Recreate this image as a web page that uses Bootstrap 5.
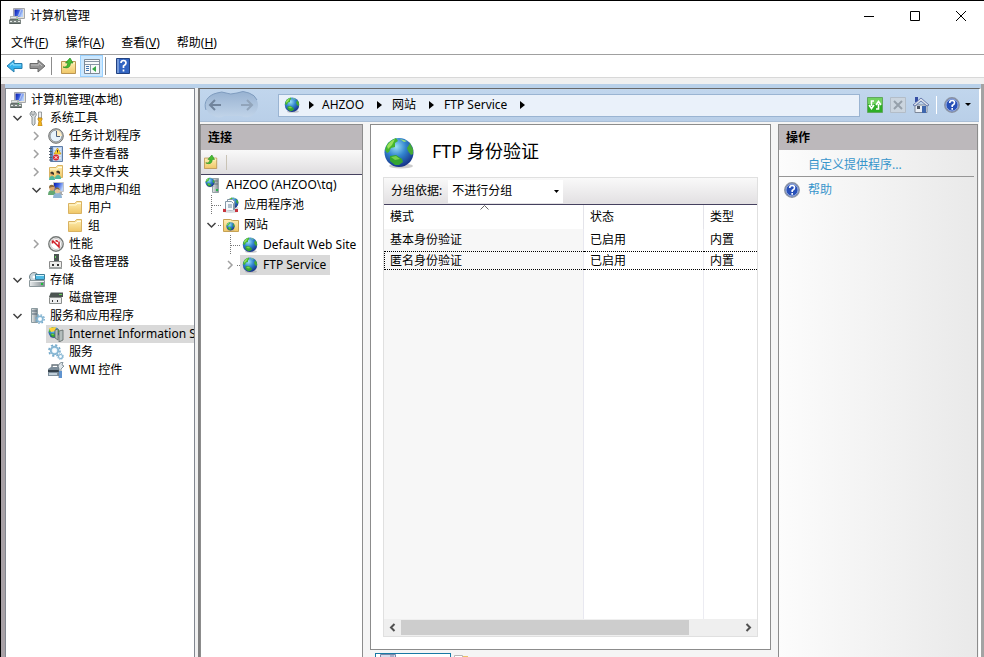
<!DOCTYPE html>
<html lang="zh-CN">
<head>
<meta charset="utf-8">
<meta name="viewport" content="width=device-width, initial-scale=1">
<title>计算机管理</title>
<link rel="stylesheet" href="https://cdn.jsdelivr.net/npm/bootstrap@5.3.0/dist/css/bootstrap.min.css">
<style>
body{font:12px/18px "Noto Sans","Noto Sans CJK SC",sans-serif;color:#000;background:#fff}
button,select{font:inherit;color:inherit}
svg{display:block;flex:none}
.window{border-top:1px solid #000;border-left:1px solid #000}
.ic{width:16px;height:16px}
.plain{border:0;background:none;padding:0}
.titlebar{height:30px;padding-left:8px}
.titlebar h1{font-size:12px;line-height:18px;margin:0 0 0 5px}
.win-btn{width:46px;height:29px}
.menus{height:24px;padding-left:10px;gap:17px;border-bottom:1px solid #a0a0a0}
.tools{height:23px;padding-left:2px;border-bottom:1px solid #d8d8d8}
.tools .plain{width:23px;height:22px;display:flex;align-items:center;justify-content:center}
.tools .pressed{background:#cce8ff;border:1px solid #99d1ff}
.vline{width:1px;height:18px;background:#8c8c8c}
.tools .vline{margin:0 5px 0 2px}
.strip{height:6px;background:#f0f0f0}
.work{background:#b9d1ea;border-left:4px solid #a8a1a6;border-right:3px solid #a3a3a3;padding-top:4px}
.panes{background:#f0f0f0}
.console-tree{width:190px;border:1px solid #828790;border-bottom:0;background:#fff;padding:2px 2px 0 2px}
.tree,.tree ul{list-style:none;margin:0;padding:0}
.tree ul ul{padding-left:19px}
.node{display:flex;align-items:center;height:18px;white-space:nowrap}
.iis .node{height:20px}
.slot{width:19px;height:100%;flex:none}
.tag{display:flex;align-items:center;height:100%;gap:5px;padding:0 4px 0 2px}
.picked{background:#d9d9d9}
.console-tree .picked{flex:1 0 auto}
.iis{margin-left:3px;border-left:2px solid #808080;border-top:1px solid #696969;border-right:2px solid #fff;background:#f5f5f5;box-shadow:0 -1px 0 #a0a0a0}
.nav-strip{height:33px;padding:0 5px 0 3px;background:linear-gradient(#c1d6ed,#b9cfe8);border-bottom:1px solid #a9bed6}
.address{height:23px;margin-left:18px;border:1px solid #9ab4d2;background:#eaf1fa;padding-left:5px}
.address a{color:#000;text-decoration:none}
.crumb{width:28px;height:12px}
.crumb-first{width:22px;height:12px}
.nav-tools{gap:7px;margin-left:7px}
.side{border:1px solid #8c8c8c;border-bottom:0}
.side h2{font-size:12px;font-weight:700;line-height:25px;height:25px;margin:0;background:#bcb8bb;padding-left:7px}
.connections{width:163px;background:#fff}
.mini-bar{height:25px;padding-left:3px;background:linear-gradient(#f9f9f9,#dfdddf);border-bottom:1px solid #45415f}
.main-gap{padding:2px 1px 0 0;gap:7px}
.feature{border:1px solid #8c8c8c;background:#fff;padding:12px}
.feature-title{height:40px;padding-bottom:8px}
.feature-title h2{font-size:18px;line-height:26px;margin:0 0 5px 17px;font-weight:400}
.listing{border:1px solid #e0e0e0}
.group-bar{height:27px;padding-left:7px;background:linear-gradient(#f9f9f9,#e2e0e2);border-bottom:1px solid #45415f}
.group-box{width:115px;height:23px;border:0;border-radius:0;padding:0 4px;margin-left:6px;appearance:none;background:#fff url("data:image/svg+xml,%3Csvg xmlns='http://www.w3.org/2000/svg' viewBox='0 0 5 3'%3E%3Cpath d='M0 0h5L2.500 3z'/%3E%3C/svg%3E") no-repeat right 4px center/5px 3px}
.cells{background:linear-gradient(90deg,#f7f7f7 199px,#e8e8f0 199px 200px,#fff 200px 319px,#ececf2 319px 320px,#fff 320px)}
.cells table{width:100%;table-layout:fixed;border-collapse:separate;border-spacing:0}
.cells th{font-weight:400;background:#fff;height:24px;padding:0 6px;border-right:1px solid #e4e4ea}
.cells th:last-child{border-right:0}
.cells td{height:22px;padding:0 6px}
.cells .focused td{height:19px;padding-top:0;border-top:1px dotted #000;border-bottom:1px dotted #000;line-height:17px}
.cells .focused td:first-child{border-left:1px dotted #000;padding-left:5px}
.c1{width:200px}.c2{width:120px}
.sorted{position:relative}
.sorted svg{position:absolute;top:0;left:96px}
.hscroll{height:17px;background:#efefef}
.hscroll button{width:17px;height:17px;display:flex;align-items:center;justify-content:center}
.thumb{width:85%;height:15px;background:#cdcdcd}
.tabs-row{height:7px;padding:3px 0 0 5px;gap:3px}
.view-tab{width:76px;height:24px;border:1px solid #1879a5;background:#fff}
.actions{width:200px;background:linear-gradient(90deg,#fcfcfc,#e9e9e9)}
.actions a{color:#3795cb;text-decoration:none}
.act-row{height:27px;padding:3px 0 0 29px;margin-right:3px;border-bottom:1px solid #969696}
.act-help{height:26px;padding-left:5px;gap:8px}
</style>
<script src="https://cdn.jsdelivr.net/npm/bootstrap@5.3.0/dist/js/bootstrap.bundle.min.js"></script>
</head>
<body>
<svg width="0" height="0" class="position-absolute" aria-hidden="true">
<defs>
<radialGradient id="sea" cx=".4" cy=".3" r=".75"><stop offset="0" stop-color="#9be0f5"/><stop offset=".45" stop-color="#3284cf"/><stop offset="1" stop-color="#122a80"/></radialGradient>
<linearGradient id="fold" x2="0" y2="1"><stop stop-color="#fff0b5"/><stop offset="1" stop-color="#efc666"/></linearGradient>
<linearGradient id="scr" x2="1" y2=".4"><stop stop-color="#0718a8"/><stop offset=".5" stop-color="#3458dc"/><stop offset="1" stop-color="#b7d1fb"/></linearGradient>
<linearGradient id="pill" x2="0" y2="1"><stop stop-color="#98b2d1"/><stop offset="1" stop-color="#c1d4e9"/></linearGradient>
<linearGradient id="met" x2="1"><stop stop-color="#e8ebec"/><stop offset="1" stop-color="#7f898e"/></linearGradient>
<symbol id="globe" viewBox="0 0 32 32"><ellipse cx="18" cy="29" rx="12" ry="2.500" fill="#999" opacity=".5"/><circle cx="16" cy="15.500" r="14.500" fill="url(#sea)"/><path d="M2 13Q4 4 13 1l2 3-3 2 0 4-4 1-2 4-2 1z" fill="#45b52f"/><path d="M4 9q3-5 8-7l-3 6-4 4z" fill="#98e15d"/><path d="M7 19l6-1 6 4 1 3-4 3-4 0-5-4z" fill="#35a530"/><path d="M8 20l5-1 4 3-5 1z" fill="#77d14e"/><path d="M27 6l3 6 0 5-2 1-3-4-1-3 2-3z" fill="#45aa36"/><path d="M17 2l7 2-3 1z" fill="#9be173"/></symbol>
<symbol id="pc" viewBox="0 0 16 16"><path fill="#e6e3d8" stroke="#a5a7ac" d="M4.500.5h11v10h-11z"/><path fill="url(#scr)" d="M5.500 1.500h8.500V9H5.500z"/><path fill="#fff" d="M11 2h1.500L10 8H9z" opacity=".5"/><path fill="#b5bab8" d="M1 8h8v4H1z"/><path fill="#7c8582" d="M0 11.500h12V16H0z"/><path fill="#e3e9e6" d="M1 13h2v1H1zm4 0h2v1H5zm4 0h2v1H9zM2 9h5v1H2z"/><path fill="#56605d" d="M1 15h10v1H1zM1 11h8v.8H1z"/><path fill="#2ab23c" d="M8 11h1v1H8z"/></symbol>
<symbol id="folder" viewBox="0 0 16 16"><path d="M1.500 3.500h6.500l1.500-2h5v12h-13z" fill="url(#fold)" stroke="#d9b261"/><path d="M10 3.500h4" stroke="#fffbe8"/><path d="M2 5h7l1-1" fill="none" stroke="#fff7d0"/></symbol>
<symbol id="upfolder" viewBox="0 0 16 16"><path d="M.5 3.500h14v12H.5z" fill="url(#fold)" stroke="#bb9653"/><path d="M9 4h5v2H9z" fill="#fff2bd"/><path d="M2 9Q6 10 7 5H4.500L9 0l3 5H9.500Q9 12 2 9z" fill="#47bd32" stroke="#258d20" stroke-width=".7"/></symbol>
<symbol id="tools" viewBox="0 0 16 16"><path d="M3 1v4h2V1q4 3 1 6v7q-2 3-3 0V7Q-1 4 3 1z" fill="#dbe0e2" stroke="#6e7679" stroke-width=".8"/><path d="M9.500 2h3v6h-3z" fill="#eee" stroke="#73797b" stroke-width=".7"/><path d="M9 8h4v2l-1 1 1 5H9l1-5-1-1z" fill="#f2b51c" stroke="#b77b0c" stroke-width=".7"/></symbol>
<symbol id="clock" viewBox="0 0 16 16"><circle cx="8" cy="8" r="7.300" fill="#bcbcb8" stroke="#6f7273"/><circle cx="8" cy="8" r="5.800" fill="#e6f2fc" stroke="#737f8b" stroke-width=".6"/><path d="M8.500 2a6 6 0 0 1 5.500 6H8.500z" fill="#ffedc2"/><path d="M8.500 3v5.500H12" fill="none" stroke="#4b5e7c"/></symbol>
<symbol id="log" viewBox="0 0 16 16"><path d="M2.500.5h12v15h-12z" fill="#b9d0ec" stroke="#5f7da7"/><path d="M3 1h2v14H3z" fill="#5b82ba"/><path d="M6 3h7M6 6h7M6 9h7M6 12h7" stroke="#fff"/><path d="M1 2.500h3M1 5.500h3M1 8.500h3M1 11.500h3M1 14h3" stroke="#515d6c"/><path d="M9.500 2l3.500 6H6z" fill="#ffd62d" stroke="#bf8600" stroke-width=".6"/><path d="M9.500 4v2.500" stroke="#432"/><circle cx="8" cy="11.500" r="3" fill="#da2832"/><path d="M6.700 10.200l2.600 2.600m0-2.600l-2.600 2.600" stroke="#fff"/></symbol>
<symbol id="shared" viewBox="0 0 16 16"><use href="#folder"/><path d="M1 16q0-4 3-4t3 4zM7 15q0-4 3-4t3 4z" fill="#4fb79d"/><circle cx="4" cy="10" r="1.800" fill="#d49a63"/><circle cx="10" cy="9" r="1.800" fill="#d49a63"/><path d="M2 9q2-3 4 0v2zm6-1q2-3 4 0v2z" fill="#3a352b"/></symbol>
<symbol id="users" viewBox="0 0 16 16"><path d="M5.500.5h10v9h-10z" fill="url(#scr)" stroke="#c3c5c8"/><path d="M11 10h3v2h1v1h-5z" fill="#aaa"/><path d="M0 13q0-5 4-5t4 5z" fill="#65a873"/><circle cx="4" cy="6" r="2.800" fill="#dda66c"/><path d="M1 6q0-4 4-3l2 2-3 0z" fill="#8b6c3e"/><path d="M5 16q0-5 4.500-5t4.500 5z" fill="#8fb4d4"/><circle cx="9.500" cy="8.500" r="2.800" fill="#e8c69c"/><path d="M7 8q0-4 4-2l1 2-3-1z" fill="#7d6644"/></symbol>
<symbol id="perf" viewBox="0 0 16 16"><circle cx="8" cy="8" r="7.200" fill="#fff" stroke="#747876" stroke-width="1.400"/><circle cx="8" cy="8" r="5.500" fill="none" stroke="#c4c4c4"/><path d="M4.500 4.500l6.500 6.500V5.500M4.500 4.500v3M7.500 4.500l2.500 1" fill="none" stroke="#cf1d25" stroke-width="1.500"/></symbol>
<symbol id="device" viewBox="0 0 16 16"><path d="M6 0h5v8H6z" fill="#4c5553"/><path d="M7 2h1v2H7z" fill="#6bdb63"/><path d="M1.500 7.500h12v6h-12z" fill="#eeeeec" stroke="#8a8a8a"/><path d="M1 13h13v2H1z" fill="#9fa3a2"/><path d="M4 10h2v2H4zm5 0h2v2H9z" fill="#333"/></symbol>
<symbol id="store" viewBox="0 0 16 16"><circle cx="5" cy="5" r="4.500" fill="#c6d3d9" stroke="#74858c"/><circle cx="5" cy="5" r="1.500" fill="#fff"/><path d="M6.500 2.500h9v5h-9z" fill="#4ebbe5" stroke="#3e7c97"/><path d="M7 3h8v1H7z" fill="#cef5ff"/><path d="M.5 8.500h15v6H.5z" fill="url(#met)" stroke="#8b979b"/><path d="M1 9h14v1H1z" fill="#eef1f2"/><path d="M12 11h2v2h-2z" fill="#1ac139"/></symbol>
<symbol id="disk" viewBox="0 0 16 16"><path d="M3 2h12v5H1z" fill="#4b5350"/><path d="M3 2h12v1H3z" fill="#a6abaa"/><path d="M11 4h3v1h-3z" fill="#64d257"/><path d="M1.500 7.500h12v6h-12z" fill="#eee" stroke="#8a8e8c"/><path d="M4 10h1v2H4zm5 0h1v2H9z" fill="#333"/></symbol>
<symbol id="cog" viewBox="0 0 16 16"><circle cx="8" cy="8" r="4.600" fill="#e8f4fb" stroke="#86b6d3" stroke-width="2.400"/><circle cx="8" cy="8" r="6.800" fill="none" stroke="#74a9ca" stroke-width="2" stroke-dasharray="2.700 2.640"/><circle cx="8" cy="8" r="2" fill="#fff"/></symbol>
<symbol id="apps" viewBox="0 0 16 16"><path d="M2.500.5h6v14h-6z" fill="url(#met)" stroke="#8b9ba0"/><path d="M3 3h5M3 6h5" stroke="#567"/><use href="#cog" x="6" y="6" width="10" height="10"/></symbol>
<symbol id="inet" viewBox="0 0 16 16"><use href="#globe" width="12" height="13"/><path d="M1 2l7-1-1 4-4 1z" fill="#ffd037"/><path d="M7 4l3-1v11l-3-2zM11 5l4-1v10l-4 2z" fill="#b4bebd" stroke="#5e6867" stroke-width=".8"/></symbol>
<symbol id="gears" viewBox="0 0 16 16"><use href="#cog" width="13" height="13"/><use href="#cog" x="9" y="9" width="7" height="7"/></symbol>
<symbol id="wmi" viewBox="0 0 16 16"><path d="M4 5V3h6v2" fill="none" stroke="#65727a" stroke-width="1.300"/><path d="M0 7l3-2h10v9H0z" fill="#7c8d9a"/><path d="M0 8h12v2H0z" fill="#35414b"/><path d="M1 11h8v2H1z" fill="#c1cfd9"/><path d="M12 1l3-1-1 3 2 1-3 3v9h-2V7l-1-3z" fill="#dfe6ea" stroke="#5d6f7a" stroke-width=".7"/><path d="M11 9h3v7h-3z" fill="#5f93cf"/></symbol>
<symbol id="host" viewBox="0 0 16 16"><path d="M7.500 1.500h6v14h-6z" fill="url(#met)" stroke="#96a1a6"/><path d="M8 4h5M8 7h5" stroke="#68757b"/><path d="M11 12h2v2h-2z" fill="#29b54a"/><use href="#globe" width="10" height="11"/></symbol>
<symbol id="pool" viewBox="0 0 16 16"><use href="#globe" x="4" width="12" height="12"/><path d="M4.500 2.500h5l2 2v9h-7z" fill="#fff" stroke="#8192a1"/><path d="M2.500 4.500h6l2 2v7h-8z" fill="#f6f9fb" stroke="#8598a8"/><path d="M5 8h4M5 10h4" stroke="#6b86a0"/><path d="M0 11q7 5 15 0v4q-7 2-15 0z" fill="#d8dce0"/><path d="M0 12h3v3H0zM12 12h3v3h-3z" fill="#c8343d"/></symbol>
<symbol id="sites" viewBox="0 0 16 16"><path d="M.5 2.500h7l2 1h6v11H.5z" fill="url(#fold)" stroke="#c6a255"/><use href="#globe" x="3" y="5" width="9" height="9"/></symbol>
<symbol id="help" viewBox="0 0 16 16"><circle cx="8" cy="8" r="7.200" fill="#2850b8" stroke="#8b93a3" stroke-width="1.500"/><circle cx="8" cy="8" r="6" fill="none" stroke="#cad8f5" stroke-width=".7"/><path d="M5.700 6q0-2.500 2.500-2.500T10.500 6q0 1.300-2.300 2.500V10M8.200 11v1.800" fill="none" stroke="#fff" stroke-width="1.600"/></symbol>
<symbol id="open" viewBox="0 0 19 18"><path d="M5.500 7l4 4 4-4" fill="none" stroke="#404040" stroke-width="1.500"/></symbol>
<symbol id="shut" viewBox="0 0 19 18"><path d="M7 5l4 4-4 4" fill="none" stroke="#a0a0a0" stroke-width="1.500"/></symbol>
<symbol id="branch" viewBox="0 0 19 20"><path d="M9.500 0v20M10 10.500h9" fill="none" stroke="#777" stroke-dasharray="1 1"/></symbol>
<symbol id="stub" viewBox="0 0 19 20"><path d="M16 10.500h3" stroke="#777" stroke-dasharray="1 1"/></symbol>
<symbol id="tri" viewBox="0 0 28 12"><path d="M13 2l5 4-5 4z"/></symbol>
</defs></svg>

<div class="window vh-100 d-flex flex-column overflow-hidden">
<header>
<div class="titlebar d-flex align-items-center">
<svg class="ic"><use href="#pc"/></svg><h1 class="fw-normal me-auto">计算机管理</h1>
<button class="plain win-btn" aria-label="最小化"><svg class="mx-auto" width="11" height="11" stroke="#000"><path d="M0 5.500h10"/></svg></button>
<button class="plain win-btn" aria-label="最大化"><svg class="mx-auto" width="11" height="11" stroke="#000" fill="none"><path d="M.5.5h9v9h-9z"/></svg></button>
<button class="plain win-btn" aria-label="关闭"><svg class="mx-auto" width="11" height="11" stroke="#000"><path d="M0 0l10 10M10 0L0 10"/></svg></button>
</div>
<nav class="menus d-flex align-items-center" aria-label="菜单">
<button class="plain">文件(<u>F</u>)</button><button class="plain">操作(<u>A</u>)</button><button class="plain">查看(<u>V</u>)</button><button class="plain">帮助(<u>H</u>)</button>
</nav>
<div class="tools d-flex align-items-center">
<button class="plain" aria-label="后退"><svg width="17" height="14"><path d="M1 7l7-6v3.500h8v5H8V13z" fill="#36b2ec" stroke="#287fae"/><path d="M4 6.500L7 4v2h8" fill="none" stroke="#9ce4ff"/></svg></button>
<button class="plain" aria-label="前进"><svg width="17" height="14"><path d="M16 7L9 1v3.500H1v5h8V13z" fill="#929292" stroke="#6b6b6b"/><path d="M2 6h8V4l3 3" fill="none" stroke="#c1c1c1"/></svg></button>
<span class="vline"></span>
<button class="plain" aria-label="向上"><svg class="ic"><use href="#upfolder"/></svg></button>
<button class="plain pressed" aria-label="显示控制台树"><svg width="16" height="15"><path d="M.5.5h15v14H.5z" fill="#f7f9fb" stroke="#7e8995"/><path d="M1 2.500h14M1 5.500h14M6.500 5v9" stroke="#8996a5"/><path d="M2 7.500h3M2 9.500h3M2 11.500h3" stroke="#4276b1"/><path d="M12 7v6L8 10z" fill="#36a746"/></svg></button>
<span class="vline"></span>
<button class="plain" aria-label="帮助"><svg width="14" height="16"><path d="M.5.5h13v15H.5z" fill="#3265c2" stroke="#224281"/><path d="M1 1h2v14H1z" fill="#7499d9"/><path d="M5 5q0-2.500 2.500-2.500T10 5q0 1.500-2.500 3v2M7.500 11.500v2" fill="none" stroke="#fff" stroke-width="1.700"/></svg></button>
</div>
<div class="strip"></div>
</header>

<div class="work flex-fill d-flex" style="min-height:0">
<div class="panes flex-fill d-flex overflow-hidden">
<nav class="console-tree flex-shrink-0 overflow-hidden" aria-label="控制台树">
<ul class="tree">
<li><div class="node"><span class="tag"><svg class="ic"><use href="#pc"/></svg>计算机管理(本地)</span></div>
<ul>
<li><div class="node"><button class="plain slot" aria-label="折叠"><svg width="19" height="18"><use href="#open"/></svg></button><span class="tag"><svg class="ic"><use href="#tools"/></svg>系统工具</span></div>
<ul>
<li class="node"><button class="plain slot" aria-label="展开"><svg width="19" height="18"><use href="#shut"/></svg></button><span class="tag"><svg class="ic"><use href="#clock"/></svg>任务计划程序</span></li>
<li class="node"><button class="plain slot" aria-label="展开"><svg width="19" height="18"><use href="#shut"/></svg></button><span class="tag"><svg class="ic"><use href="#log"/></svg>事件查看器</span></li>
<li class="node"><button class="plain slot" aria-label="展开"><svg width="19" height="18"><use href="#shut"/></svg></button><span class="tag"><svg class="ic"><use href="#shared"/></svg>共享文件夹</span></li>
<li><div class="node"><button class="plain slot" aria-label="折叠"><svg width="19" height="18"><use href="#open"/></svg></button><span class="tag"><svg class="ic"><use href="#users"/></svg>本地用户和组</span></div>
<ul>
<li class="node"><span class="slot"></span><span class="tag"><svg class="ic"><use href="#folder"/></svg>用户</span></li>
<li class="node"><span class="slot"></span><span class="tag"><svg class="ic"><use href="#folder"/></svg>组</span></li>
</ul></li>
<li class="node"><button class="plain slot" aria-label="展开"><svg width="19" height="18"><use href="#shut"/></svg></button><span class="tag"><svg class="ic"><use href="#perf"/></svg>性能</span></li>
<li class="node"><span class="slot"></span><span class="tag"><svg class="ic"><use href="#device"/></svg>设备管理器</span></li>
</ul></li>
<li><div class="node"><button class="plain slot" aria-label="折叠"><svg width="19" height="18"><use href="#open"/></svg></button><span class="tag"><svg class="ic"><use href="#store"/></svg>存储</span></div>
<ul><li class="node"><span class="slot"></span><span class="tag"><svg class="ic"><use href="#disk"/></svg>磁盘管理</span></li></ul></li>
<li><div class="node"><button class="plain slot" aria-label="折叠"><svg width="19" height="18"><use href="#open"/></svg></button><span class="tag"><svg class="ic"><use href="#apps"/></svg>服务和应用程序</span></div>
<ul>
<li class="node"><span class="slot"></span><span class="tag picked"><svg class="ic"><use href="#inet"/></svg>Internet Information S</span></li>
<li class="node"><span class="slot"></span><span class="tag"><svg class="ic"><use href="#gears"/></svg>服务</span></li>
<li class="node"><span class="slot"></span><span class="tag"><svg class="ic"><use href="#wmi"/></svg>WMI 控件</span></li>
</ul></li>
</ul></li>
</ul>
</nav>

<main class="iis flex-fill d-flex flex-column" style="min-width:0">
<div class="nav-strip d-flex align-items-center">
<svg width="57" height="28" fill="none"><path d="M14 2q5-2 9 0t11 0q6-3 12 0c12 4 12 20 0 24q-4 1-8-1H21q-5 3-10 0C-1 21 0 5 14 2z" fill="url(#pill)"/><path d="M3 19C0 11 5 4 14 2q5-2 9 0t11 0q6-3 12 0 6 2 8 7" stroke="#7f9cbf"/><g stroke="#71849c" stroke-width="2"><path d="M18 14H7m5-5l-5 5 5 5"/><path d="M38 14h11m-5-5l5 5-5 5" stroke="#91a4ba"/></g></svg>
<nav class="address flex-fill d-flex align-items-center" aria-label="路径">
<svg class="ic"><use href="#globe"/></svg><svg class="crumb-first" viewBox="4 0 22 12"><use href="#tri" width="28" height="12"/></svg>
<a href="#">AHZOO</a><svg class="crumb"><use href="#tri"/></svg><a href="#">网站</a><svg class="crumb"><use href="#tri"/></svg><a href="#">FTP Service</a><svg class="crumb"><use href="#tri"/></svg>
</nav>
<div class="nav-tools d-flex align-items-center">
<button class="plain" aria-label="刷新"><svg class="ic"><path d="M.5.500h15v15H.5z" fill="#2eae26" stroke="#60a860"/><path d="M1 1h14v6H1z" fill="#8ee179" opacity=".7"/><path d="M7 4H4.500v5M2 8l2.500 3.500L7 8M9 12h2.500V7M9 8l2.500-3.500L14 8" fill="none" stroke="#fff" stroke-width="1.600"/></svg></button>
<button class="plain" aria-label="停止"><svg class="ic"><path d="M.5.5h15v15H.5z" fill="#cbd5df" stroke="#b3bdc8"/><path d="M4 4l8 8M12 4l-8 8" stroke="#95a0aa" stroke-width="2"/></svg></button>
<button class="plain" aria-label="主页"><svg class="ic"><path d="M2 8h12v7.500H2z" fill="#e9eef5" stroke="#7c8799"/><path d="M2 0h3v5H2z" fill="#354ea4"/><path d="M0 8l8-7 8 7-2 1-6-5-6 5z" fill="#dde2ea" stroke="#5267a1" stroke-width=".8"/><path d="M9 9h4v7H9z" fill="#3e66ad"/><path d="M4 9h3v3H4z" fill="#4a5362"/></svg></button>
<span class="vline bg-white"></span>
<button class="plain d-flex align-items-center" aria-label="帮助菜单"><svg class="ic"><use href="#help"/></svg><svg width="14" height="4"><path d="M5 0h6L8 3z"/></svg></button>
</div>
</div>

<div class="main-gap flex-fill d-flex" style="min-height:0">
<section class="side connections flex-shrink-0 overflow-hidden">
<h2>连接</h2>
<div class="mini-bar d-flex align-items-center"><button class="plain" aria-label="向上"><svg width="14" height="14"><use href="#upfolder"/></svg></button><span class="vline ms-2" style="background:#c9c3b5;height:15px"></span></div>
<ul class="tree ps-0">
<li><div class="node" style="padding-left:2px"><span class="tag"><svg class="ic"><use href="#host"/></svg>AHZOO (AHZOO\tq)</span></div>
<ul style="padding-left:1px">
<li class="node"><svg class="slot"><use href="#branch"/></svg><span class="tag"><svg class="ic"><use href="#pool"/></svg>应用程序池</span></li>
<li><div class="node"><button class="plain slot" aria-label="折叠"><svg width="19" height="20"><use href="#open"/><use href="#stub"/></svg></button><span class="tag"><svg class="ic"><use href="#sites"/></svg>网站</span></div>
<ul>
<li class="node"><svg class="slot"><use href="#branch"/></svg><span class="tag"><svg class="ic"><use href="#globe"/></svg>Default Web Site</span></li>
<li class="node"><button class="plain slot" aria-label="展开"><svg width="19" height="20"><use href="#shut"/><use href="#stub"/></svg></button><span class="tag picked"><svg class="ic"><use href="#globe"/></svg>FTP Service</span></li>
</ul></li>
</ul></li>
</ul>
</section>

<div class="flex-fill d-flex flex-column" style="min-width:0">
<section class="feature flex-fill d-flex flex-column">
<div class="feature-title d-flex align-items-center"><svg width="32" height="32"><use href="#globe"/></svg><h2>FTP 身份验证</h2></div>
<div class="listing flex-fill d-flex flex-column">
<div class="group-bar d-flex align-items-center"><label for="grouping">分组依据:</label><select id="grouping" class="group-box"><option>不进行分组</option></select></div>
<div class="cells flex-fill">
<table>
<thead><tr><th class="c1 sorted">模式<svg width="9" height="5"><path d="M.5 4.500l4-4 4 4" fill="none" stroke="#666"/></svg></th><th class="c2">状态</th><th>类型</th></tr></thead>
<tbody><tr><td>基本身份验证</td><td>已启用</td><td>内置</td></tr><tr class="focused"><td>匿名身份验证</td><td>已启用</td><td>内置</td></tr></tbody>
</table>
</div>
<div class="hscroll d-flex align-items-center">
<button class="plain" aria-label="向左滚动"><svg width="7" height="9"><path d="M5.500 1L2 4.500 5.500 8" fill="none" stroke="#505050" stroke-width="2"/></svg></button>
<div class="flex-fill"><div class="thumb"></div></div>
<button class="plain" aria-label="向右滚动"><svg width="7" height="9"><path d="M1.500 1L5 4.500 1.500 8" fill="none" stroke="#505050" stroke-width="2"/></svg></button>
</div>
</div>
</section>
<div class="tabs-row d-flex overflow-hidden align-items-start">
<button class="plain view-tab d-flex" aria-label="功能视图"><svg class="ic ms-1 mt-0"><path d="M.5.5h15v14H.5z" fill="#d8dcec" stroke="#7986a8"/><path d="M11 1v3M13 1v3" stroke="#7986a8"/></svg></button>
<button class="plain" aria-label="内容视图"><svg class="ic"><path d="M7 3h7v10H7z" fill="#ecc267"/><path d="M.5 2.500h8v12h-8z" fill="#fff" stroke="#b7b7b7"/></svg></button>
</div>
</div>

<section class="side actions flex-shrink-0">
<h2>操作</h2>
<div class="act-row d-flex align-items-center"><a href="#">自定义提供程序...</a></div>
<div class="act-help d-flex align-items-center"><svg class="ic"><use href="#help"/></svg><a href="#">帮助</a></div>
</section>
</div>
</main>
</div>
</div>
</div>
</body>
</html>
